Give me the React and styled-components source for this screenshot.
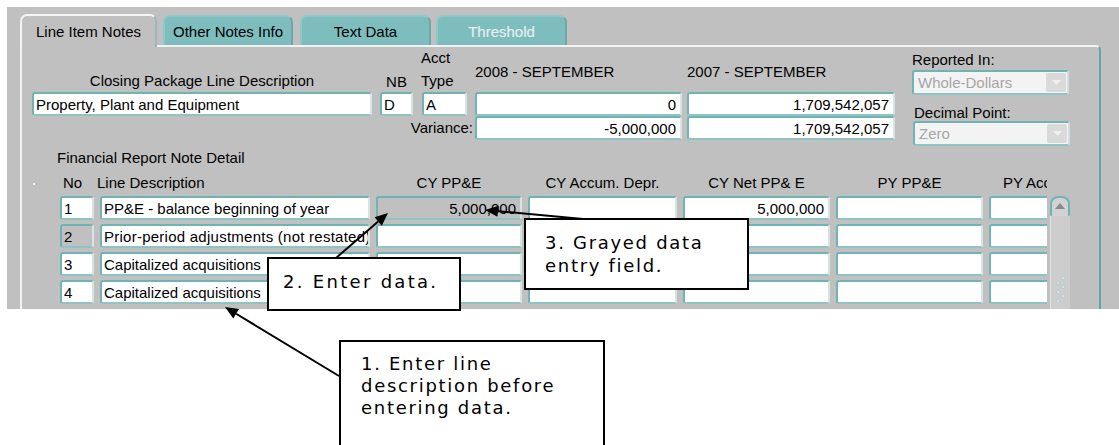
import React from "react";
import styled, { createGlobalStyle } from "styled-components";

const GlobalStyle = createGlobalStyle`
  html, body { margin: 0; padding: 0; background: #fff; }
  body { font-family: "Liberation Sans", Arial, sans-serif; }
  * { box-sizing: border-box; }
`;

const TEAL = "#7dbdbd";
const BORDER = "#6fb4b4";
const GRAY = "#c0c0c0";

const Page = styled.div`
  position: relative;
  width: 1119px;
  height: 445px;
  overflow: hidden;
  background: #fff;
  padding: 7px 0 0 7px;
`;

const Window = styled.div`
  width: 1112px;
  height: 302px;
  background: ${GRAY};
  overflow: hidden;
  padding: 7px 0 0 13px;
  font-size: 15px;
  color: #000;
`;

const TabBar = styled.div`
  display: flex;
  align-items: flex-end;
  height: 31px;
`;

const Tab = styled.div`
  position: relative;
  z-index: ${(p) => (p.$active ? 2 : 1)};
  width: ${(p) => p.$w}px;
  margin-left: ${(p) => p.$ml || 0}px;
  height: ${(p) => (p.$active ? 33 : 30)}px;
  margin-bottom: ${(p) => (p.$active ? -2 : 0)}px;
  background: ${(p) => (p.$active ? GRAY : TEAL)};
  border-radius: 7px 7px 0 0;
  border-top: 2px solid ${(p) => (p.$active ? "#f4f4f4" : "#8fc8c8")};
  border-left: 2px solid ${(p) => (p.$active ? "#f4f4f4" : "#8fc8c8")};
  border-right: 2px solid ${(p) => (p.$active ? "#9ab8b8" : "#6aa9a9")};
  display: flex;
  justify-content: center;
  padding-top: ${(p) => (p.$active ? 7 : 6)}px;
  line-height: 17px;
  color: ${(p) => (p.$disabled ? "#e6eeee" : "#000")};
  text-shadow: ${(p) => (p.$disabled ? "0 0 1px #a8d0d0" : "none")};
  white-space: nowrap;
`;

const Panel = styled.div`
  width: 1081px;
  height: 270px;
  border-top: 2px solid #f2f2f2;
  border-left: 2px solid #f2f2f2;
  border-right: 2px solid #5fa6a6;
  border-top-right-radius: 5px;
  display: flex;
  flex-direction: column;
`;

const TopSection = styled.div`
  display: flex;
  padding-left: 10px;
`;

const HeaderGrid = styled.div`
  display: grid;
  grid-template-columns: 348px 42px 53px 212px 208px;
  grid-template-rows: 45px 24px 24px;
  align-items: end;
`;

const ColLabel = styled.div`
  line-height: ${(p) => p.$lh || 17}px;
  padding-bottom: ${(p) => p.$pb || 0}px;
  margin-left: ${(p) => p.$ml || 0}px;
  width: ${(p) => (p.$w ? `${p.$w}px` : "auto")};
  text-align: ${(p) => p.$align || "left"};
  white-space: nowrap;
`;

const VarianceLabel = styled.div`
  grid-column: 1 / 4;
  text-align: right;
  padding-right: 2px;
  line-height: 24px;
`;

const Field = styled.div`
  width: ${(p) => p.$w}px;
  height: 24px;
  margin-top: ${(p) => p.$mt || 0}px;
  border: 2px solid ${BORDER};
  border-right-color: #d6e4e4;
  border-bottom-color: #8ec4c4;
  border-radius: 3px;
  background: ${(p) => (p.$gray ? GRAY : "#fff")};
  line-height: 21px;
  padding: 0 ${(p) => (p.$align === "right" ? 4 : 2)}px 0 2px;
  text-align: ${(p) => p.$align || "left"};
  white-space: nowrap;
  overflow: hidden;
`;

const UnitsColumn = styled.div`
  display: flex;
  flex-direction: column;
  margin-left: 17px;
  padding-top: 4px;
`;

const UnitsLabel = styled.div`
  line-height: 17px;
  margin-top: ${(p) => p.$mt || 0}px;
  margin-left: ${(p) => p.$ml || 0}px;
`;

const Select = styled.div`
  width: 157px;
  height: 25px;
  margin-top: ${(p) => p.$mt || 0}px;
  margin-left: ${(p) => p.$ml || 0}px;
  border: 2px solid ${BORDER};
  border-right-color: #cfdede;
  border-bottom-color: #8ec4c4;
  border-radius: 3px;
  background: #f3f3f3;
  display: flex;
  align-items: center;
  color: #a6a6a6;
  padding-left: 4px;
  line-height: 21px;
`;

const SelectText = styled.span`
  flex: 1;
`;

const DropButton = styled.div`
  width: 20px;
  height: 19px;
  margin-right: 1px;
  background: #dadada;
  border-radius: 2px;
  display: flex;
  align-items: center;
  justify-content: center;
`;

const DetailTitle = styled.div`
  margin: 3px 0 0 35px;
  line-height: 17px;
`;

const DetailArea = styled.div`
  display: flex;
  padding-left: 38px;
  margin-top: 6px;
`;

const Marker = styled.span`
  width: 2px;
  height: 2px;
  margin: 11px 0 0 -27px;
  margin-right: 25px;
  background: #f0f0f0;
  flex: none;
`;

const GridClip = styled.div`
  width: 987px;
  overflow: hidden;
`;

const DetailGrid = styled.div`
  display: grid;
  grid-template-columns: 34px 270px 146px 149px 147px 147px 141px;
  column-gap: 6px;
  width: 1070px;
`;

const HeaderCell = styled.div`
  height: 22px;
  line-height: 22px;
  white-space: nowrap;
  text-align: ${(p) => p.$align || "center"};
  padding-left: ${(p) => p.$pl || 0}px;
  margin-left: ${(p) => p.$ml || 0}px;
  margin-bottom: 2px;
`;

const RowField = styled(Field)`
  width: auto;
  margin-bottom: 4px;
  letter-spacing: ${(p) => p.$ls || 0}px;
`;

const Scrollbar = styled.div`
  width: 20px;
  margin: 24px 0 0 3px;
  display: flex;
  flex-direction: column;
`;

const ScrollUp = styled.div`
  height: 20px;
  border: 2px solid ${BORDER};
  border-bottom: none;
  border-radius: 8px 8px 2px 2px;
  background: #d2d2d2;
  display: flex;
  justify-content: center;
  padding-top: 5px;
`;

const ScrollTrack = styled.div`
  height: 100px;
  background: #cdcdcd;
  border-left: 1px solid #e2e2e2;
  display: flex;
  justify-content: center;
  padding-top: 60px;
`;

const Overlay = styled.div`
  position: absolute;
  inset: 0;
  pointer-events: none;
`;

const Callout = styled.div`
  position: absolute;
  left: ${(p) => p.$x}px;
  top: ${(p) => p.$y}px;
  width: ${(p) => p.$w}px;
  height: ${(p) => p.$h}px;
  background: #fff;
  border: 2px solid #000;
  padding: ${(p) => p.$pad};
  font-family: "DejaVu Sans", Verdana, sans-serif;
  font-size: 18px;
  letter-spacing: ${(p) => p.$ls || 1.7}px;
  line-height: ${(p) => p.$lh || 23}px;
  color: #000;
  white-space: nowrap;
`;

const ArrowSvg = styled.svg`
  position: absolute;
  left: 0;
  top: 0;
`;

function Arrow({ x1, y1, x2, y2 }) {
  const dx = x2 - x1;
  const dy = y2 - y1;
  const len = Math.hypot(dx, dy);
  const ux = dx / len;
  const uy = dy / len;
  const hl = 13;
  const hw = 5.5;
  const bx = x2 - ux * hl;
  const by = y2 - uy * hl;
  const p1 = `${bx - uy * hw},${by + ux * hw}`;
  const p2 = `${bx + uy * hw},${by - ux * hw}`;
  return (
    <g>
      <line x1={x1} y1={y1} x2={bx} y2={by} stroke="#000" strokeWidth="2" />
      <polygon points={`${x2},${y2} ${p1} ${p2}`} fill="#000" />
    </g>
  );
}

const rows = [
  { no: "1", desc: "PP&E - balance beginning of year", cy: "5,000,000", cyGray: true, net: "5,000,000" },
  { no: "2", noGray: true, desc: "Prior-period adjustments (not restated)", ls: 0.25 },
  { no: "3", desc: "Capitalized acquisitions" },
  { no: "4", desc: "Capitalized acquisitions" },
];

export default function App() {
  return (
    <Page>
      <GlobalStyle />
      <Window>
        <TabBar>
          <Tab $active $w={137}>Line Item Notes</Tab>
          <Tab $w={130} $ml={6}>Other Notes Info</Tab>
          <Tab $w={131} $ml={7}>Text Data</Tab>
          <Tab $w={131} $ml={5} $disabled>Threshold</Tab>
        </TabBar>
        <Panel>
          <TopSection>
            <HeaderGrid>
              <ColLabel $w={340} $align="center" $pb={3}>Closing Package Line Description</ColLabel>
              <ColLabel $w={33} $align="center" $pb={2}>NB</ColLabel>
              <ColLabel $lh={22.5} $ml={-1}>Acct<br />Type</ColLabel>
              <ColLabel $pb={12}>2008 - SEPTEMBER</ColLabel>
              <ColLabel $pb={12}>2007 - SEPTEMBER</ColLabel>

              <Field $w={340}>Property, Plant and Equipment</Field>
              <Field $w={33}>D</Field>
              <Field $w={45}>A</Field>
              <Field $w={207} $align="right">0</Field>
              <Field $w={208} $align="right">1,709,542,057</Field>

              <VarianceLabel>Variance:</VarianceLabel>
              <Field $w={207} $align="right" $mt={2}>-5,000,000</Field>
              <Field $w={208} $align="right" $mt={2}>1,709,542,057</Field>
            </HeaderGrid>
            <UnitsColumn>
              <UnitsLabel>Reported In:</UnitsLabel>
              <Select $mt={2}>
                <SelectText>Whole-Dollars</SelectText>
                <DropButton>
                  <svg width="9" height="5" viewBox="0 0 9 5"><polygon points="0,0 9,0 4.5,5" fill="#efefef" /></svg>
                </DropButton>
              </Select>
              <UnitsLabel $mt={9} $ml={2}>Decimal Point:</UnitsLabel>
              <Select $ml={1}>
                <SelectText>Zero</SelectText>
                <DropButton>
                  <svg width="9" height="5" viewBox="0 0 9 5"><polygon points="0,0 9,0 4.5,5" fill="#efefef" /></svg>
                </DropButton>
              </Select>
            </UnitsColumn>
          </TopSection>

          <DetailTitle>Financial Report Note Detail</DetailTitle>

          <DetailArea>
            <Marker />
            <GridClip>
              <DetailGrid>
                <HeaderCell $align="left" $pl={3}>No</HeaderCell>
                <HeaderCell $align="left" $ml={-3}>Line Description</HeaderCell>
                <HeaderCell>CY PP&amp;E</HeaderCell>
                <HeaderCell>CY Accum. Depr.</HeaderCell>
                <HeaderCell>CY Net PP&amp; E</HeaderCell>
                <HeaderCell>PY PP&amp;E</HeaderCell>
                <HeaderCell>PY Accum. Depr.</HeaderCell>
                {rows.map((r) => (
                  <React.Fragment key={r.no}>
                    <RowField $gray={r.noGray}>{r.no}</RowField>
                    <RowField $ls={r.ls}>{r.desc}</RowField>
                    <RowField $gray={r.cyGray} $align="right">{r.cy || ""}</RowField>
                    <RowField />
                    <RowField $align="right">{r.net || ""}</RowField>
                    <RowField />
                    <RowField />
                  </React.Fragment>
                ))}
              </DetailGrid>
            </GridClip>
            <Scrollbar>
              <ScrollUp>
                <svg width="10" height="6" viewBox="0 0 10 6"><polygon points="0,6 10,6 5,0" fill="#8a8a8a" /></svg>
              </ScrollUp>
              <ScrollTrack>
                <svg width="12" height="26" viewBox="0 0 12 26">
                  {[[8, 2], [3, 7], [8, 11], [3, 16], [8, 20], [3, 25]].map(([cx, cy], i) => (
                    <circle key={i} cx={cx} cy={cy} r="1.3" fill="#f4f4f4" stroke="#8fc4c4" strokeWidth="0.6" />
                  ))}
                </svg>
              </ScrollTrack>
            </Scrollbar>
          </DetailArea>
        </Panel>
      </Window>

      <Overlay>
        <ArrowSvg width="1119" height="445" viewBox="0 0 1119 445">
          <Arrow x1={339} y1={376} x2={225} y2={307} />
          <Arrow x1={336} y1={258} x2={388} y2={213} />
          <Arrow x1={583} y1={219} x2={485} y2={210} />
        </ArrowSvg>
        <Callout $x={267} $y={257} $w={194} $h={54} $pad="11px 0 0 14px" $ls={2.3}>2. Enter data.</Callout>
        <Callout $x={524} $y={218} $w={225} $h={72} $pad="11px 0 0 19px">3. Grayed data<br />entry field.</Callout>
        <Callout $x={339} $y={340} $w={266} $h={120} $pad="11px 0 0 20px" $lh={22}>1. Enter line<br />description before<br />entering data.</Callout>
      </Overlay>
    </Page>
  );
}
